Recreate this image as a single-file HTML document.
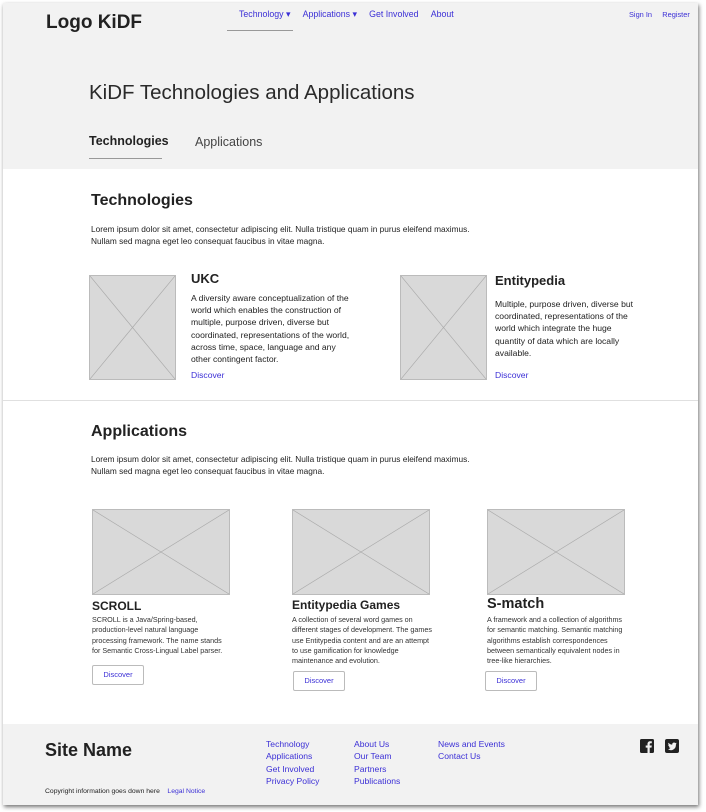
<!DOCTYPE html>
<html><head><meta charset="utf-8"><style>
*{margin:0;padding:0;box-sizing:border-box}
body{width:706px;height:812px;background:#fff;font-family:"Liberation Sans",Arial,sans-serif;color:#222;position:relative;overflow:hidden}
.page{position:absolute;left:3px;top:3px;width:695px;height:802px;background:#fff;box-shadow:1px 2px 4px rgba(0,0,0,.55)}
.a{position:absolute}
.lnk{color:#3b2fd6}
.hdr{position:absolute;left:0;top:0;width:695px;height:166px;background:#f2f2f2}
.ph{position:absolute;background:#d9d9d9;border:1px solid #bbb}
.ph svg{position:absolute;left:0;top:0;width:100%;height:100%}
.p{font-size:8.6px;line-height:12.2px;color:#222}
.p2{font-size:7.2px;line-height:10.3px;color:#333}
.btn{position:absolute;width:52px;height:20px;border:1px solid #bbb;border-radius:2px;background:#fff;font-size:7.5px;color:#3b2fd6;text-align:center;line-height:18px}
.foot{position:absolute;left:0;top:721px;width:695px;height:81px;background:#f2f2f2}
.fl{font-size:8.6px;line-height:12.3px;color:#3b2fd6}
</style></head><body>
<div class="page">
<div class="hdr"></div>
<div class="a" style="left:43px;top:9px;font-size:19px;font-weight:bold">Logo KiDF</div>
<div class="a lnk" style="left:236px;top:6px;font-size:8.8px;white-space:nowrap">Technology ▾ &nbsp;&nbsp;&nbsp;&nbsp;Applications ▾ &nbsp;&nbsp;&nbsp;&nbsp;Get Involved &nbsp;&nbsp;&nbsp;&nbsp;About</div>
<div class="a" style="left:224px;top:27px;width:66px;height:1px;background:#999"></div>
<div class="a lnk" style="left:626px;top:7px;font-size:7.4px;white-space:nowrap">Sign In &nbsp;&nbsp;&nbsp;&nbsp;Register</div>
<div class="a" style="left:86px;top:78px;font-size:20.5px;color:#2a2a2a">KiDF Technologies and Applications</div>
<div class="a" style="left:86px;top:131px;font-size:12.5px;font-weight:bold">Technologies</div>
<div class="a" style="left:192px;top:132px;font-size:12.5px;color:#444">Applications</div>
<div class="a" style="left:86px;top:155px;width:73px;height:1px;background:#999"></div>

<div class="a" style="left:88px;top:189px;font-size:16px;font-weight:bold">Technologies</div>
<div class="a p" style="left:88px;top:220px;width:385px;font-size:8.3px">Lorem ipsum dolor sit amet, consectetur adipiscing elit. Nulla tristique quam in purus eleifend maximus. Nullam sed magna eget leo consequat faucibus in vitae magna.</div>

<div class="ph" style="left:86px;top:272px;width:87px;height:105px"><svg viewBox="0 0 87 105" preserveAspectRatio="none"><path d="M0 0L87 105M87 0L0 105" stroke="#aaa" stroke-width=".7"/></svg></div>
<div class="a" style="left:188px;top:268px;font-size:13px;font-weight:bold">UKC</div>
<div class="a p" style="left:188px;top:289px;width:160px">A diversity aware conceptualization of the world which enables the construction of multiple, purpose driven, diverse but coordinated, representations of the world, across time, space, language and any other contingent factor.</div>
<div class="a lnk" style="left:188px;top:367px;font-size:8.6px">Discover</div>

<div class="ph" style="left:397px;top:272px;width:87px;height:105px"><svg viewBox="0 0 87 105" preserveAspectRatio="none"><path d="M0 0L87 105M87 0L0 105" stroke="#aaa" stroke-width=".7"/></svg></div>
<div class="a" style="left:492px;top:270px;font-size:13px;font-weight:bold">Entitypedia</div>
<div class="a p" style="left:492px;top:295px;width:140px">Multiple, purpose driven, diverse but coordinated, representations of the world which integrate the huge quantity of data which are locally available.</div>
<div class="a lnk" style="left:492px;top:367px;font-size:8.6px">Discover</div>

<div class="a" style="left:0;top:397px;width:695px;height:1px;background:#e0e0e0"></div>
<div class="a" style="left:88px;top:420px;font-size:16px;font-weight:bold">Applications</div>
<div class="a p" style="left:88px;top:450px;width:385px;font-size:8.3px">Lorem ipsum dolor sit amet, consectetur adipiscing elit. Nulla tristique quam in purus eleifend maximus. Nullam sed magna eget leo consequat faucibus in vitae magna.</div>

<div class="ph" style="left:89px;top:506px;width:138px;height:86px"><svg viewBox="0 0 138 86" preserveAspectRatio="none"><path d="M0 0L138 86M138 0L0 86" stroke="#aaa" stroke-width=".7"/></svg></div>
<div class="a" style="left:89px;top:596px;font-size:12px;font-weight:bold">SCROLL</div>
<div class="a p2" style="left:89px;top:612px;width:140px">SCROLL is a Java/Spring-based, production-level natural language processing framework. The name stands for Semantic Cross-Lingual Label parser.</div>
<div class="btn" style="left:89px;top:662px">Discover</div>

<div class="ph" style="left:289px;top:506px;width:138px;height:86px"><svg viewBox="0 0 138 86" preserveAspectRatio="none"><path d="M0 0L138 86M138 0L0 86" stroke="#aaa" stroke-width=".7"/></svg></div>
<div class="a" style="left:289px;top:595px;font-size:12px;font-weight:bold">Entitypedia Games</div>
<div class="a p2" style="left:289px;top:612px;width:140px">A collection of several word games on different stages of development. The games use Entitypedia content and are an attempt to use gamification for knowledge maintenance and evolution.</div>
<div class="btn" style="left:290px;top:668px">Discover</div>

<div class="ph" style="left:484px;top:506px;width:138px;height:86px"><svg viewBox="0 0 138 86" preserveAspectRatio="none"><path d="M0 0L138 86M138 0L0 86" stroke="#aaa" stroke-width=".7"/></svg></div>
<div class="a" style="left:484px;top:593px;font-size:14.5px;font-weight:bold">S-match</div>
<div class="a p2" style="left:484px;top:612px;width:145px">A framework and a collection of algorithms for semantic matching. Semantic matching algorithms establish correspondences between semantically equivalent nodes in tree-like hierarchies.</div>
<div class="btn" style="left:482px;top:668px">Discover</div>

<div class="foot"></div>
<div class="a" style="left:42px;top:737px;font-size:18px;font-weight:bold">Site Name</div>
<div class="a fl" style="left:263px;top:735px">Technology<br>Applications<br>Get Involved<br>Privacy Policy</div>
<div class="a fl" style="left:351px;top:735px">About Us<br>Our Team<br>Partners<br>Publications</div>
<div class="a fl" style="left:435px;top:735px">News and Events<br>Contact Us</div>
<div class="a" style="left:42px;top:785px;font-size:6.8px;color:#222;white-space:nowrap">Copyright information goes down here &nbsp;&nbsp;&nbsp;<span class="lnk">Legal Notice</span></div>
<svg class="a" style="left:637px;top:736px" width="14" height="14" viewBox="0 0 14 14"><rect width="14" height="14" rx="1.5" fill="#222"/><path d="M9.7 14V8.6h1.8l.3-2.1H9.7V5.2c0-.6.2-1 1-1h1.1V2.3c-.2 0-.9-.1-1.6-.1-1.6 0-2.7 1-2.7 2.8v1.5H5.7v2.1h1.8V14z" fill="#f2f2f2"/></svg>
<svg class="a" style="left:662px;top:736px" width="14" height="14" viewBox="0 0 14 14"><rect width="14" height="14" rx="2" fill="#222"/><path d="M11.5 4.3c-.3.1-.7.2-1 .3.4-.2.6-.6.8-1-.3.2-.7.3-1.1.4a1.8 1.8 0 0 0-3 1.6C5.7 5.5 4.4 4.8 3.5 3.7c-.5.8-.2 1.8.5 2.3-.3 0-.6-.1-.8-.2 0 .9.6 1.6 1.4 1.8-.3.1-.5.1-.8 0 .2.7.9 1.2 1.7 1.3A3.6 3.6 0 0 1 3 10.3 5.1 5.1 0 0 0 10.9 5.7v-.2c.3-.3.5-.6.6-1.2z" fill="#f2f2f2"/></svg>
</div>
</body></html>
